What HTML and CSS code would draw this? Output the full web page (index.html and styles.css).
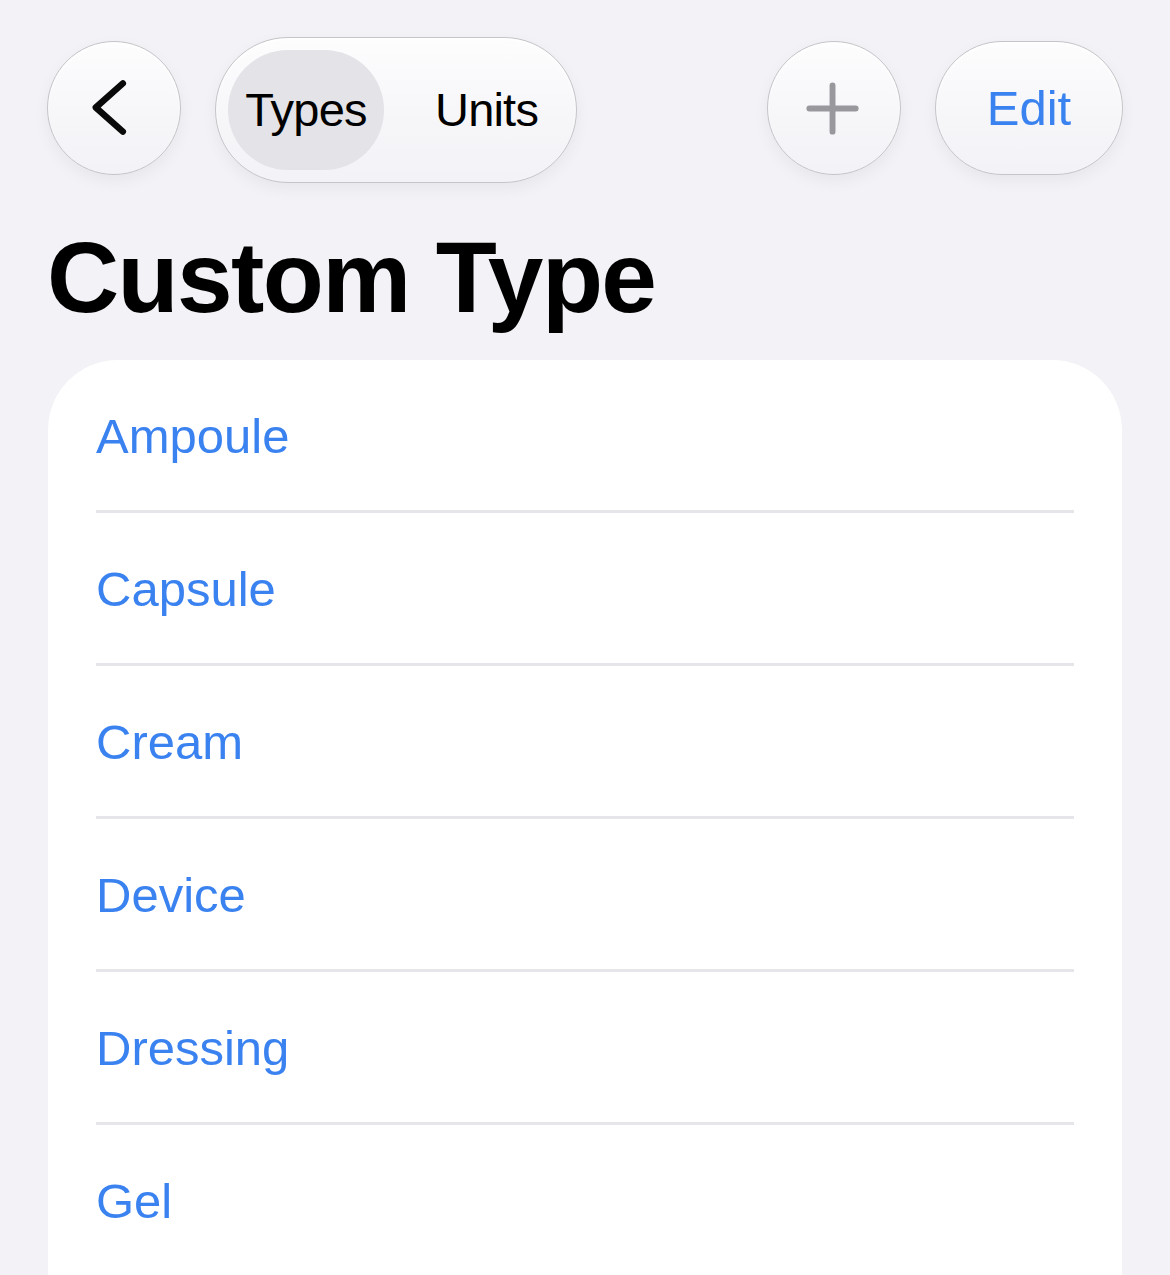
FILE: index.html
```html
<!DOCTYPE html>
<html lang="en">
<head>
<meta charset="utf-8">
<title>Custom Type</title>
<link rel="stylesheet" href="styles.css">
</head>
<body>
<div class="toolbar">
  <button class="glass circle back" aria-label="Back">
    <svg width="134" height="134" viewBox="0 0 134 134"><path d="M76 42 L48.5 66.5 L76 91" fill="none" stroke="#0a0a0a" stroke-width="6.5" stroke-linecap="round" stroke-linejoin="round"/></svg>
  </button>
  <div class="glass segment">
    <span class="seg seg-on">Types</span>
    <span class="seg seg-off">Units</span>
  </div>
  <div class="spacer"></div>
  <button class="glass circle add" aria-label="Add">
    <svg width="134" height="134" viewBox="0 0 134 134"><path d="M65.5 44 V91 M42 67.5 H89" fill="none" stroke="#98989d" stroke-width="6" stroke-linecap="round"/></svg>
  </button>
  <button class="glass edit">Edit</button>
</div>
<h1 class="title">Custom Type</h1>
<div class="card">
  <div class="row">Ampoule</div>
  <div class="row">Capsule</div>
  <div class="row">Cream</div>
  <div class="row">Device</div>
  <div class="row">Dressing</div>
  <div class="row">Gel</div>
</div>
</body>
</html>
```
FILE: styles.css
```css
html, body {
  margin: 0;
  padding: 0;
  height: 1275px;
  overflow: hidden;
}
body {
  background: #f2f2f7;
  font-family: "Liberation Sans", Arial, sans-serif;
  color: #000;
}
.toolbar {
  display: flex;
  align-items: flex-start;
  padding: 37px 47px 0 47px;
  height: 146px;
}
.glass {
  box-sizing: border-box;
  border: 1.5px solid #c4c4c9;
  background: linear-gradient(180deg, #fdfdfe 0%, #f6f6f9 60%, #f3f3f7 100%);
  box-shadow: 0 6px 16px rgba(0, 0, 0, 0.05), inset 0 2px 3px rgba(255, 255, 255, 0.9);
  padding: 0;
  margin: 0;
  font-family: inherit;
}
.circle {
  width: 134px;
  height: 134px;
  border-radius: 50%;
  margin-top: 4px;
  display: flex;
  align-items: center;
  justify-content: center;
}
.circle svg { display: block; }
.segment {
  margin-left: 34px;
  width: 362px;
  height: 146px;
  border-radius: 73px;
  padding: 12px;
  display: flex;
  align-items: center;
}
.seg {
  font-size: 47px;
  letter-spacing: -0.8px;
  line-height: 120px;
  height: 120px;
  color: #000;
}
.seg-on {
  width: 156px;
  border-radius: 60px;
  background: #e3e3e8;
  text-align: center;
}
.seg-off {
  padding-left: 51px;
}
.spacer { flex: 1; }
.add { margin-right: 34px; }
.edit {
  width: 188px;
  height: 134px;
  margin-top: 4px;
  border-radius: 67px;
  font-size: 49px;
  color: #3a82f0;
  text-align: center;
  line-height: 130px;
}
.title {
  margin: 44px 0 0 47px;
  font-size: 100px;
  line-height: 100px;
  font-weight: 700;
  letter-spacing: -1.6px;
}
.card {
  margin: 33px 48px 0 48px;
  background: #fff;
  border-radius: 70px 70px 0 0;
}
.row {
  margin: 0 48px 0 48px;
  height: 147px;
  padding-top: 3px;
  line-height: 147px;
  font-size: 49px;
  color: #3a82f0;
  border-bottom: 3px solid #e5e5ea;
}
```
